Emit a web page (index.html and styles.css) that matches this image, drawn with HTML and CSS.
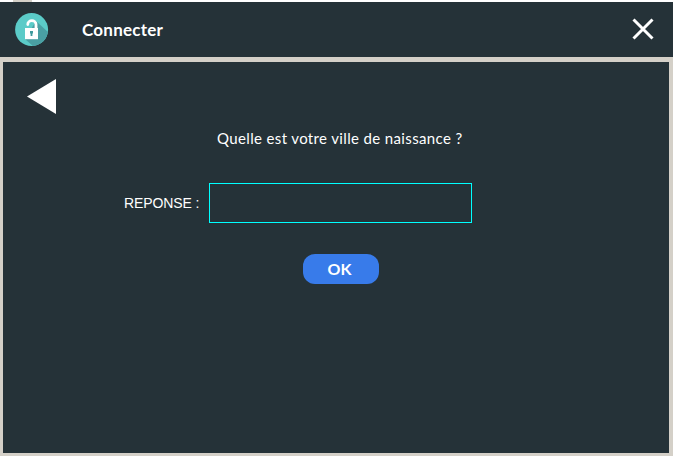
FILE: index.html
```
<!DOCTYPE html>
<html lang="fr">
<head>
<meta charset="utf-8">
<title>Connecter</title>
<link rel="stylesheet" href="styles.css">
</head>
<body>
<div class="topline"></div>
<header class="titlebar">
  <svg class="lock" width="34" height="34" viewBox="0 0 34 34">
    <defs><clipPath id="disc"><circle cx="16.6" cy="16.6" r="16.5"/></clipPath></defs>
    <g clip-path="url(#disc)">
      <rect width="34" height="34" fill="#5bcbc8"/>
      <path d="M21 8 34 20V34H19L10 26Z" fill="#4a9fa3"/>
      <path d="M12.8 11.6V11.2a4.1 3.5 0 0 1 8.2 0V16" fill="none" stroke="#fff" stroke-width="2.8" stroke-linecap="round"/>
      <rect x="10" y="15" width="13" height="11.2" fill="#fff"/>
      <path d="M15 18h3v2.5h-.6V23h-1.8v-2.5H15Z" fill="#3f9a9d"/>
    </g>
  </svg>
  <h1 class="title">Connecter</h1>
  <svg class="close" width="24" height="24" viewBox="0 0 24 24">
    <path d="M2.5 2.5 21.5 21.5M21.5 2.5 2.5 21.5" stroke="#fff" stroke-width="3"/>
  </svg>
</header>
<main class="panel">
  <svg class="back" width="30" height="36" viewBox="0 0 30 36"><path d="M0 17.5 29 0V35Z" fill="#fff"/></svg>
  <p class="question">Quelle est votre ville de naissance ?</p>
  <form class="answer">
    <label class="label" for="reponse">REPONSE :</label>
    <input class="field" id="reponse" type="text">
  </form>
  <button class="ok" type="button">OK</button>
</main>
</body>
</html>
```
FILE: styles.css
```
* { box-sizing: border-box; }
body {
  margin: 0;
  height: 456px;
  overflow: hidden;
  background: #d4d0c8;
  color: #fff;
  font-family: "Century Gothic", Lato, sans-serif;
}
.topline {
  height: 2px;
  background: linear-gradient(90deg, #fff 13px, #d4d0c8 13px 32px, #fff 32px);
}
.titlebar {
  display: flex;
  align-items: center;
  height: 55px;
  padding: 0 18px 0 15px;
  background: #253238;
}
.title {
  margin: 1px 0 0 33px;
  font-size: 17px;
  line-height: 22px;
  font-weight: 700;
  letter-spacing: 0.25px;
}
.close { margin-left: auto; margin-bottom: 2px; }
.panel {
  display: flex;
  flex-direction: column;
  height: 391px;
  margin: 5px 4px 0 3px;
  padding-top: 17px;
  background: #253238;
}
.back { margin-left: 24px; flex: none; }
.question {
  margin: 13px 0 0 214px;
  font-size: 15px;
  line-height: 20px;
  letter-spacing: 0.36px;
  white-space: nowrap;
}
.answer {
  display: flex;
  align-items: center;
  margin: 35px 0 0 121px;
}
.label {
  width: 85px;
  font: 14px/18px "Liberation Sans", sans-serif;
  letter-spacing: -0.1px;
}
.field {
  width: 263px;
  height: 40px;
  border: 1px solid #00ffff;
  background: transparent;
  color: #fff;
  outline: none;
}
.ok {
  width: 76px;
  height: 30px;
  margin: 31px 0 0 300px;
  padding: 0 3px 0 0;
  border: 0;
  border-radius: 12px;
  background: #387bea;
  color: #fff;
  font: 700 16px/30px "Century Gothic", Lato, sans-serif;
}
```
